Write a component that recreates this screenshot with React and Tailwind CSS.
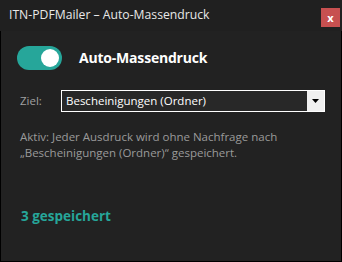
export default function App() {
  return (
    <div className="w-[342px] h-[262px] bg-[#202020] flex flex-col" style={{ fontFamily: '"Open Sans", "Noto Sans", sans-serif' }}>
      <div className="h-[31px] flex items-start justify-between pl-[9px] pr-[2px]">
        <div className="text-[12.2px] text-[#e8e8e8] mt-[6px] leading-[18px]">ITN-PDFMailer – Auto-Massendruck</div>
        <div className="w-[19px] h-[19px] mt-[8px] bg-[#c75050] flex items-center justify-center text-white text-[11px] font-bold leading-none">x</div>
      </div>
      <div className="flex-1 border-x border-b border-black bg-[#222222] flex flex-col">
        <div className="flex items-center mt-[15px] ml-[16px]">
          <div className="w-[45px] h-[24px] rounded-full bg-[#26a69a] flex items-center justify-end pr-[3px]">
            <div className="w-[18px] h-[18px] rounded-full bg-white" />
          </div>
          <div className="ml-[17px] text-[14px] tracking-[-0.2px] font-bold text-white leading-none">Auto-Massendruck</div>
        </div>
        <div className="flex items-center mt-[20px] ml-[19px]">
          <div className="w-[41px] text-[11.5px] text-[#a0a0a0]">Ziel:</div>
          <div className="w-[264px] h-[22px] border border-white bg-[#282828] flex">
            <div className="flex-1 text-[11.5px] text-white pl-[4px] leading-[20px]">Bescheinigungen (Ordner)</div>
            <div className="w-[17px] h-full bg-[#f0f0f0] flex items-center justify-center">
              <svg width="7" height="4" viewBox="0 0 7 4"><path d="M0 0h7L3.5 4z" fill="#000" /></svg>
            </div>
          </div>
        </div>
        <div className="mt-[17px] ml-[19px] text-[11.5px] leading-[16px] text-[#9a9a9a]">
          Aktiv: Jeder Ausdruck wird ohne Nachfrage nach<br />„Bescheinigungen (Ordner)“ gespeichert.
        </div>
        <div className="mt-[49px] ml-[20px] text-[13.5px] font-bold text-[#26a69a] leading-none">3 gespeichert</div>
      </div>
    </div>
  );
}
